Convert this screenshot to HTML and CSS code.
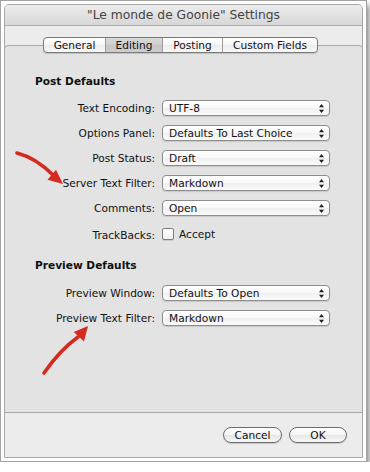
FILE: index.html
```html
<!DOCTYPE html>
<html>
<head>
<meta charset="utf-8">
<link rel="stylesheet" href="styles.css">
</head>
<body>
<div class="frame">
  <div class="window">
    <div class="titlebar">"Le monde de Goonie" Settings</div>
    <div class="content">
      <div class="tabs">
        <span class="seg seg-general">General</span><span class="seg seg-editing sel">Editing</span><span class="seg seg-posting">Posting</span><span class="seg seg-custom">Custom Fields</span>
      </div>
      <div class="tabbox">
        <h2 class="heading">Post Defaults</h2>
        <div class="form">
          <label class="lbl">Text Encoding:</label>
          <div class="popup"><span>UTF-8</span><svg class="updown" width="5" height="9" viewBox="0 0 5 9"><path d="M2.5 0 L5 3.2 H0 Z M0 5.8 H5 L2.5 9 Z" fill="#222"/></svg></div>
          <label class="lbl">Options Panel:</label>
          <div class="popup"><span>Defaults To Last Choice</span><svg class="updown" width="5" height="9" viewBox="0 0 5 9"><path d="M2.5 0 L5 3.2 H0 Z M0 5.8 H5 L2.5 9 Z" fill="#222"/></svg></div>
          <label class="lbl">Post Status:</label>
          <div class="popup"><span>Draft</span><svg class="updown" width="5" height="9" viewBox="0 0 5 9"><path d="M2.5 0 L5 3.2 H0 Z M0 5.8 H5 L2.5 9 Z" fill="#222"/></svg></div>
          <label class="lbl">Server Text Filter:</label>
          <div class="popup"><span>Markdown</span><svg class="updown" width="5" height="9" viewBox="0 0 5 9"><path d="M2.5 0 L5 3.2 H0 Z M0 5.8 H5 L2.5 9 Z" fill="#222"/></svg></div>
          <label class="lbl">Comments:</label>
          <div class="popup"><span>Open</span><svg class="updown" width="5" height="9" viewBox="0 0 5 9"><path d="M2.5 0 L5 3.2 H0 Z M0 5.8 H5 L2.5 9 Z" fill="#222"/></svg></div>
          <label class="lbl lbl-check">TrackBacks:</label>
          <div class="check"><span class="checkbox"></span><span>Accept</span></div>
        </div>
        <h2 class="heading heading-2">Preview Defaults</h2>
        <div class="form">
          <label class="lbl">Preview Window:</label>
          <div class="popup"><span>Defaults To Open</span><svg class="updown" width="5" height="9" viewBox="0 0 5 9"><path d="M2.5 0 L5 3.2 H0 Z M0 5.8 H5 L2.5 9 Z" fill="#222"/></svg></div>
          <label class="lbl">Preview Text Filter:</label>
          <div class="popup"><span>Markdown</span><svg class="updown" width="5" height="9" viewBox="0 0 5 9"><path d="M2.5 0 L5 3.2 H0 Z M0 5.8 H5 L2.5 9 Z" fill="#222"/></svg></div>
        </div>
      </div>
      <div class="buttons">
        <button class="btn btn-cancel">Cancel</button>
        <button class="btn btn-ok">OK</button>
      </div>
    </div>
  </div>
</div>
<svg class="arrows" width="370" height="472" viewBox="0 0 370 472">
  <g fill="none" stroke="#d42a1f" stroke-width="3.6" stroke-linecap="round">
    <path d="M17 153 Q36 158 53 175"/>
    <path d="M44 373 Q60 350 78 337"/>
  </g>
  <g fill="#d42a1f">
    <polygon points="63,184 47.5,179.8 56,169.8"/>
    <polygon points="88,326 84,341.5 73.8,332"/>
  </g>
</svg>
</body>
</html>
```
FILE: styles.css
```css
body {
  margin: 0;
  background: #fff;
  font-family: "DejaVu Sans", sans-serif;
  color: #111;
}

.frame {
  width: 367px;
  height: 462px;
  box-sizing: border-box;
  border: 1px solid #a3a3a3;
  padding: 3px;
  background: #fff;
  box-shadow: 2px 5px 6px rgba(0, 0, 0, 0.5);
}

.window {
  height: 100%;
  box-sizing: border-box;
  border: 1px solid #a8a8a8;
  border-radius: 5px 5px 0 0;
  background: #ececec;
  display: flex;
  flex-direction: column;
}

.titlebar {
  height: 20px;
  border-bottom: 1px solid #acacac;
  border-radius: 4px 4px 0 0;
  background: linear-gradient(#ececec, #d7d7d7);
  text-align: center;
  font-size: 12.3px;
  line-height: 21px;
  color: #444;
}

.content {
  flex: 1;
  display: flex;
  flex-direction: column;
  padding-top: 11px;
}

.tabs {
  position: relative;
  z-index: 1;
  display: flex;
  width: 275px;
  height: 16px;
  margin-left: 38px;
  box-sizing: border-box;
  border: 1px solid #7a7a7a;
  border-radius: 4px;
  overflow: hidden;
  background: linear-gradient(#ffffff, #f6f6f6 50%, #ececec 51%, #f8f8f8);
  box-shadow: 0 1px 1px rgba(0, 0, 0, 0.15);
}

.seg {
  box-sizing: border-box;
  font-size: 10.6px;
  line-height: 14px;
  text-align: center;
}

.seg + .seg {
  border-left: 1px solid #9b9b9b;
}

.seg-general { width: 61px; }
.seg-editing { width: 57px; }
.seg-posting { width: 60px; }
.seg-custom { width: 95px; }

.seg.sel {
  background: linear-gradient(#dadada, #cdcdcd 50%, #c4c4c4 51%, #cecece);
}

.tabbox {
  margin: -8px -1px 0;
  border: 1px solid #a9a9a9;
  border-radius: 4px 4px 0 0;
  background: #e3e3e3;
  padding: 29px 0 86px;
}

.heading {
  margin: 0 0 12px 30px;
  font-size: 10.6px;
  font-weight: bold;
  line-height: 13px;
}

.heading-2 {
  margin-top: 18px;
  margin-bottom: 13px;
}

.form {
  display: grid;
  grid-template-columns: 150px 168px;
  grid-auto-rows: 16px;
  column-gap: 7px;
  row-gap: 9px;
}

.lbl {
  text-align: right;
  font-size: 10.6px;
  line-height: 16px;
  white-space: nowrap;
}

.popup {
  display: flex;
  align-items: center;
  height: 16px;
  box-sizing: border-box;
  padding-left: 6px;
  border: 1px solid #8d8d8d;
  border-radius: 4px;
  background: linear-gradient(#ffffff, #f8f8f8 50%, #efefef 51%, #fbfbfb);
  box-shadow: 0 1px 1px rgba(0, 0, 0, 0.12);
  font-size: 10.6px;
  line-height: 14px;
}

.updown {
  margin-left: auto;
  margin-right: 5px;
}

.lbl-check {
  margin-top: 2px;
}

.check {
  display: flex;
  align-items: center;
  gap: 5px;
  margin-top: 2px;
  font-size: 10.6px;
}

.checkbox {
  width: 12px;
  height: 12px;
  box-sizing: border-box;
  border: 1px solid #7c7c7c;
  border-radius: 2px;
  background: linear-gradient(#ffffff, #f0f0f0);
  box-shadow: 0 1px 1px rgba(0, 0, 0, 0.12);
}

.buttons {
  display: flex;
  justify-content: flex-end;
  gap: 7px;
  padding: 14px 15px 0 0;
}

.btn {
  width: 59px;
  height: 16px;
  padding: 0;
  box-sizing: border-box;
  border: 1px solid #6c6c6c;
  border-radius: 8px;
  background: linear-gradient(#ffffff, #f4f4f4 50%, #e6e6e6 51%, #f7f7f7);
  box-shadow: 0 1px 1px rgba(0, 0, 0, 0.15);
  font-family: "DejaVu Sans", sans-serif;
  font-size: 10.6px;
  line-height: 14px;
  color: #111;
}

.btn-ok {
  width: 58px;
}

.arrows {
  position: absolute;
  top: 0;
  left: 0;
  pointer-events: none;
}
```
